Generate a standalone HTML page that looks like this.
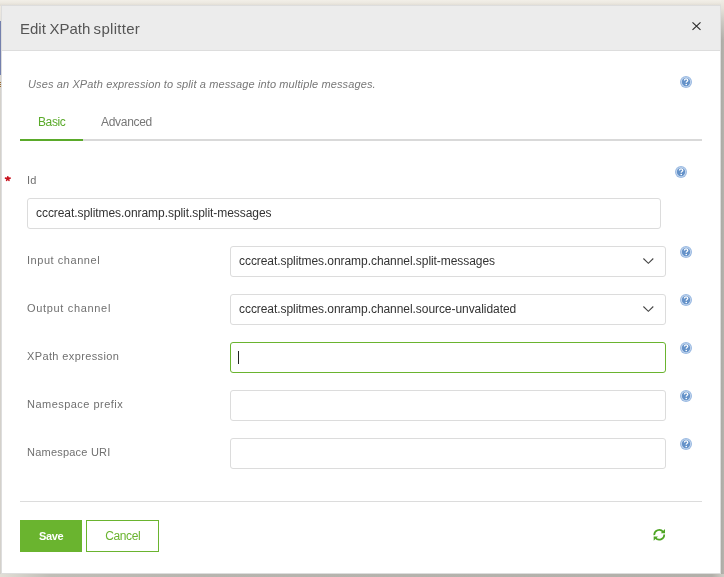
<!DOCTYPE html>
<html><head><meta charset="utf-8">
<style>
*{box-sizing:border-box;margin:0;padding:0}
html,body{width:724px;height:577px;overflow:hidden}
body{font-family:"Liberation Sans",sans-serif;background:#b8b6b0;position:relative}
.r{position:absolute}
.t{position:absolute;white-space:nowrap;will-change:transform;line-height:14px}
.lbl{font-size:11px;color:#707070}
.val{font-size:12px;color:#333;letter-spacing:-0.06px}
.inp{position:absolute;height:31px;border:1px solid #dcdcdc;border-radius:3px;background:#fff}
.help{position:absolute;width:12px;height:12px}
.chev{position:absolute;width:12px;height:8px}
</style></head><body>
<svg width="0" height="0" style="position:absolute"><defs><g id="hq"><circle cx="6" cy="6" r="6" fill="#9bbae2"/><circle cx="6" cy="6" r="4.85" fill="#d3e1f3"/><circle cx="6" cy="6" r="4.2" fill="#6592c9"/><path d="M4.4 4.5Q4.4 2.9 6.1 2.9Q7.8 2.9 7.8 4.3Q7.8 5.1 7 5.5Q6.2 5.9 6.2 6.8" stroke="#fff" stroke-width="1.25" fill="none"/><rect x="5.5" y="7.9" width="1.5" height="1.2" fill="#fff"/></g></defs></svg>
<div class="r" style="left:0;top:0;width:724px;height:6px;background:linear-gradient(180deg,#f2efe8 0,#ece8e0 3px,#e2ded6 5px)"></div>
<div class="r" style="left:0;top:6px;width:1px;height:571px;background:linear-gradient(180deg,#eeeae2 0,#e6e3dc 14px,#d4d1cb 90px)"></div>
<div class="r" style="left:0;top:21px;width:1px;height:54px;background:#7480ad"></div>
<div class="r" style="left:0;top:82px;width:1px;height:1px;background:#9a6a30"></div><div class="r" style="left:0;top:84px;width:1px;height:1px;background:#9a6a30"></div><div class="r" style="left:0;top:86px;width:1px;height:1px;background:#9a6a30"></div>
<div class="r" style="left:721px;top:6px;width:3px;height:571px;background:linear-gradient(90deg,#acaaa4 0,#b6b4ae 3px)"></div>
<div class="r" style="left:721px;top:0;width:3px;height:40px;background:linear-gradient(180deg,#efebe4 0,#e6e2da 8px,rgba(220,217,210,.6) 22px,rgba(190,188,182,0) 40px)"></div>
<div class="r" style="left:0;top:574px;width:724px;height:3px;background:linear-gradient(90deg,#e2dfd7 0,#c0beb7 50px,#b7b5af 200px,#b2b0aa 712px,#d0cdc6 724px)"></div>
<div class="r" style="left:1px;top:5px;width:720px;height:569px;background:#fff;border:1px solid #dddddd"></div>
<div class="r" style="left:2px;top:6px;width:718px;height:44px;background:#ececec"></div>
<div class="r" style="left:2px;top:50px;width:718px;height:1px;background:#dddddd"></div>
<div class="t" style="left:20px;top:20px;font-size:15px;color:#555;line-height:17px">Edit<span style="margin-left:-0.6px"> XPath</span><span style="margin-left:-1.2px;letter-spacing:0.3px"> splitter</span></div>
<svg class="r" style="left:691px;top:21px;width:11px;height:11px" viewBox="0 0 11 11"><path d="M1.5 1.4L9.5 8.9M9.5 1.4L1.5 8.9" stroke="#2a2a2a" stroke-width="1.15" fill="none"/></svg>
<div class="t" style="left:28px;top:77px;font-size:11px;font-style:italic;color:#777;letter-spacing:0.125px">Uses an XPath expression to split a message into multiple messages.</div>
<svg class="help" style="left:680.0px;top:76.0px" viewBox="0 0 12 12"><use href="#hq"/></svg>
<div class="t" style="left:38px;top:115px;font-size:12px;color:#5aaa2a;letter-spacing:-0.4px">Basic</div>
<div class="t" style="left:101px;top:115px;font-size:12px;color:#777;letter-spacing:-0.3px">Advanced</div>
<div class="r" style="left:20px;top:139px;width:682px;height:2px;background:#d9d9d9"></div>
<div class="r" style="left:20px;top:139px;width:63px;height:2px;background:#5aaa2a"></div>
<svg class="r" style="left:4px;top:175px;width:8px;height:7px" viewBox="0 0 8 7"><path d="M3.8 3.5V1.8M3.8 3.5L1.5 3.1M3.8 3.5L6.1 3.1M3.8 3.5L2.6 5.3M3.8 3.5L5 5.3" stroke="#c8121e" stroke-width="1.6" stroke-linecap="round" fill="none"/></svg>
<div class="t lbl" style="left:27px;top:173px;letter-spacing:0.3px">Id</div>
<svg class="help" style="left:675.0px;top:166.0px" viewBox="0 0 12 12"><use href="#hq"/></svg>
<div class="inp" style="left:27px;top:198px;width:634px"></div>
<div class="t val" style="left:36px;top:206px">cccreat.splitmes.onramp.split.split-messages</div>
<div class="t lbl" style="left:27px;top:253px;letter-spacing:0.55px">Input channel</div><div class="inp" style="left:230px;top:246px;width:436px"></div><div class="t val" style="left:239px;top:254px">cccreat.splitmes.onramp.channel.split-messages</div><svg class="chev" style="left:642px;top:257px" viewBox="0 0 12 8"><path d="M1.4 1.5L6.35 6.3L11.3 1.5" stroke="#444" stroke-width="1.1" fill="none"/></svg><svg class="help" style="left:680.0px;top:246.0px" viewBox="0 0 12 12"><use href="#hq"/></svg><div class="t lbl" style="left:27px;top:301px;letter-spacing:0.67px">Output channel</div><div class="inp" style="left:230px;top:294px;width:436px"></div><div class="t val" style="left:239px;top:302px">cccreat.splitmes.onramp.channel.source-unvalidated</div><svg class="chev" style="left:642px;top:305px" viewBox="0 0 12 8"><path d="M1.4 1.5L6.35 6.3L11.3 1.5" stroke="#444" stroke-width="1.1" fill="none"/></svg><svg class="help" style="left:680.0px;top:294.0px" viewBox="0 0 12 12"><use href="#hq"/></svg><div class="t lbl" style="left:27px;top:349px;letter-spacing:0.38px">XPath expression</div><div class="inp" style="left:230px;top:342px;width:436px;border-color:#6ab42f"></div><div class="r" style="left:238px;top:351px;width:1px;height:13px;background:#222"></div><svg class="help" style="left:680.0px;top:342.0px" viewBox="0 0 12 12"><use href="#hq"/></svg><div class="t lbl" style="left:27px;top:397px;letter-spacing:0.47px">Namespace prefix</div><div class="inp" style="left:230px;top:390px;width:436px"></div><svg class="help" style="left:680.0px;top:390.0px" viewBox="0 0 12 12"><use href="#hq"/></svg><div class="t lbl" style="left:27px;top:445px;letter-spacing:0.22px">Namespace URI</div><div class="inp" style="left:230px;top:438px;width:436px"></div><svg class="help" style="left:680.0px;top:438.0px" viewBox="0 0 12 12"><use href="#hq"/></svg>
<div class="r" style="left:20px;top:501px;width:682px;height:1px;background:#dcdcdc"></div>
<div class="t" style="left:20px;top:520px;width:62px;height:32px;background:#6ab42f;color:#fff;font-weight:bold;font-size:11px;letter-spacing:-0.35px;line-height:32px;text-align:center;text-indent:0.35px">Save</div>
<div class="t" style="left:86px;top:520px;width:73px;height:32px;border:1px solid #6ab42f;color:#6ab42f;font-size:12px;letter-spacing:-0.38px;line-height:30px;text-align:center;text-indent:0.38px">Cancel</div>
<svg class="r" style="left:652px;top:528px;width:14px;height:14px" viewBox="0 0 14 14"><g fill="none" stroke="#4ea524" stroke-width="1.75"><path d="M2.3 7.1A4.9 4.9 0 0 1 11.1 3.9"/><path d="M12.2 6.5A4.9 4.9 0 0 1 3.4 9.7"/></g><g fill="#4ea524"><path d="M13 0.9V5.2H8.7Z"/><path d="M1.7 12.8V8.5H6Z"/></g></svg>
</body></html>
